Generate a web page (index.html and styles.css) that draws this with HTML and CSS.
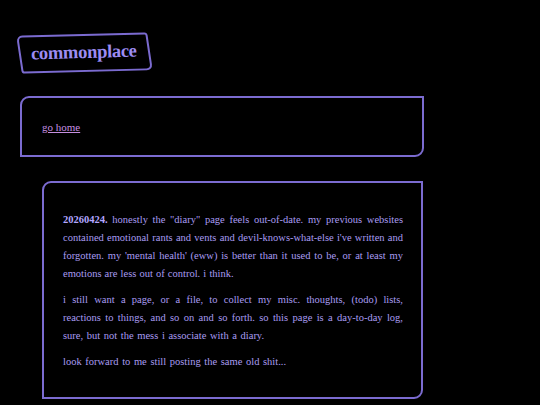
FILE: index.html
```html
<!DOCTYPE html>
<html>
<head>
<meta charset="utf-8">
<link rel="stylesheet" href="styles.css">
</head>
<body>
<div class="page">
  <header class="logo"><span class="logo-text">commonplace</span></header>
  <nav class="nav"><a class="home" href="#">go home</a></nav>
  <main class="entry">
    <p><b class="date">20260424.</b> honestly the "diary" page feels out-of-date. my previous websites contained emotional rants and vents and devil-knows-what-else i've written and forgotten. my 'mental health' (eww) is better than it used to be, or at least my emotions are less out of control. i think.</p>
    <p>i still want a page, or a file, to collect my misc. thoughts, (todo) lists, reactions to things, and so on and so forth. so this page is a day-to-day log, sure, but not the mess i associate with a diary.</p>
    <p>look forward to me still posting the same old shit...</p>
  </main>
</div>
</body>
</html>
```
FILE: styles.css
```css
html, body {
  margin: 0;
  background: #000;
}
body {
  font-family: "Liberation Serif", "DejaVu Serif", serif;
  color: #a99cf2;
}
.page {
  padding: 34px 0 0 20px;
}
.logo {
  position: relative;
  display: inline-block;
  margin-left: -1px;
  padding: 8px 13px 9px 12px;
}
.logo::before {
  content: "";
  position: absolute;
  inset: 0;
  border: 2px solid #7b6bd0;
  border-radius: 6px 3px 6px 3px;
  transform: rotate(-1.5deg) skewX(7deg);
}
.logo-text {
  position: relative;
  display: inline-block;
  font-size: 18.5px;
  font-weight: bold;
  color: #9d8cf2;
  letter-spacing: -0.3px;
  transform: rotate(-1.5deg);
}
.nav {
  height: 57px;
  margin-top: 24px;
  border: 2px solid #7b6bd0;
  border-radius: 9px 0 9px 0;
  display: flex;
  align-items: center;
  padding-left: 20px;
  box-sizing: content-box;
  width: 380px;
}
.home {
  font-size: 11px;
  color: #c58fe0;
  text-decoration: underline;
}
.entry {
  margin: 24px 0 0 22px;
  width: 340px;
  padding: 28px 18px 26px 19px;
  border: 2px solid #7b6bd0;
  border-radius: 9px 0 9px 0;
}
.entry p {
  margin: 0 0 8px;
  font-size: 10.5px;
  line-height: 18px;
  word-spacing: 0.5px;
  text-align: justify;
}
.entry p + p {
  word-spacing: 1px;
}
.entry p:last-child {
  margin-bottom: 0;
}
.date {
  color: #b3a6ff;
}
```
